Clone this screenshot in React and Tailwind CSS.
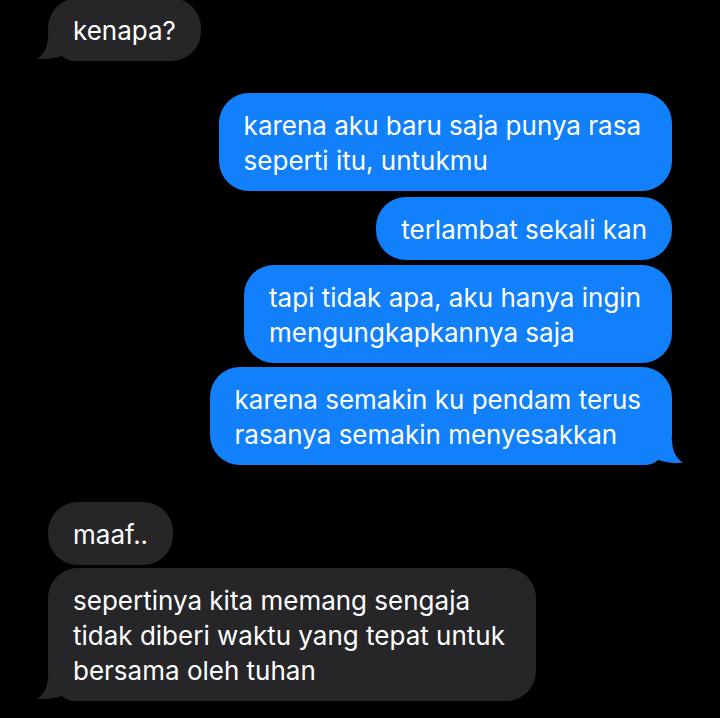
import React from 'react'

const BLUE = '#127ffb'
const GRAY = '#262628'

// chat thread, top to bottom
const MESSAGES = [
  { from: 'them', lines: ['kenapa?'], tail: true, gap: 'mt-[-2px]' },
  { from: 'me', lines: ['karena aku baru saja punya rasa', 'seperti itu, untukmu'], gap: 'mt-[32px]' },
  { from: 'me', lines: ['terlambat sekali kan'], gap: 'mt-[6px]' },
  { from: 'me', lines: ['tapi tidak apa, aku hanya ingin', 'mengungkapkannya saja'], gap: 'mt-[5px]' },
  { from: 'me', lines: ['karena semakin ku pendam terus', 'rasanya semakin menyesakkan'], tail: true, gap: 'mt-[4px]' },
  { from: 'them', lines: ['maaf..'], gap: 'mt-[37px]' },
  { from: 'them', lines: ['sepertinya kita memang sengaja', 'tidak diberi waktu yang tepat untuk', 'bersama oleh tuhan'], tail: true, gap: 'mt-[3px]' },
]

function Tail({ side, color }) {
  return (
    <svg
      width="40"
      height="26"
      viewBox="0 0 40 26"
      className={
        side === 'left'
          ? 'absolute bottom-0 left-[-11px]'
          : 'absolute bottom-0 right-[-11px] -scale-x-100'
      }
    >
      <path
        d="M11 0 L40 0 L40 26 C34 26 29 25 25 20.5 C19 23.5 9 24.5 0 23.5 C6 20 11 13 11 0 Z"
        fill={color}
      />
    </svg>
  )
}

function Bubble({ msg }) {
  const mine = msg.from === 'me'
  // wrapped messages keep some slack on the right edge
  const padRight = msg.lines.length > 1 ? 'pr-[31px]' : 'pr-[25px]'
  return (
    <div className={`flex ${mine ? 'justify-end pr-[48px]' : 'justify-start pl-[48px]'} ${msg.gap}`}>
      <div
        className={`relative rounded-[30px] pl-[25px] ${padRight} pt-[15px] pb-[13px] text-white text-[26px] leading-[35px] whitespace-nowrap ${mine ? 'bg-[#127ffb]' : 'bg-[#262628]'}`}
      >
        {msg.tail && <Tail side={mine ? 'right' : 'left'} color={mine ? BLUE : GRAY} />}
        <div className="relative">
          {msg.lines.map((l) => (
            <div key={l}>{l}</div>
          ))}
        </div>
      </div>
    </div>
  )
}

export default function App() {
  return (
    <div
      className="w-[720px] h-[718px] bg-black overflow-hidden flex flex-col antialiased"
      style={{ fontFamily: 'Inter, "Noto Sans", sans-serif' }}
    >
      {MESSAGES.map((m, i) => (
        <Bubble key={i} msg={m} />
      ))}
    </div>
  )
}
